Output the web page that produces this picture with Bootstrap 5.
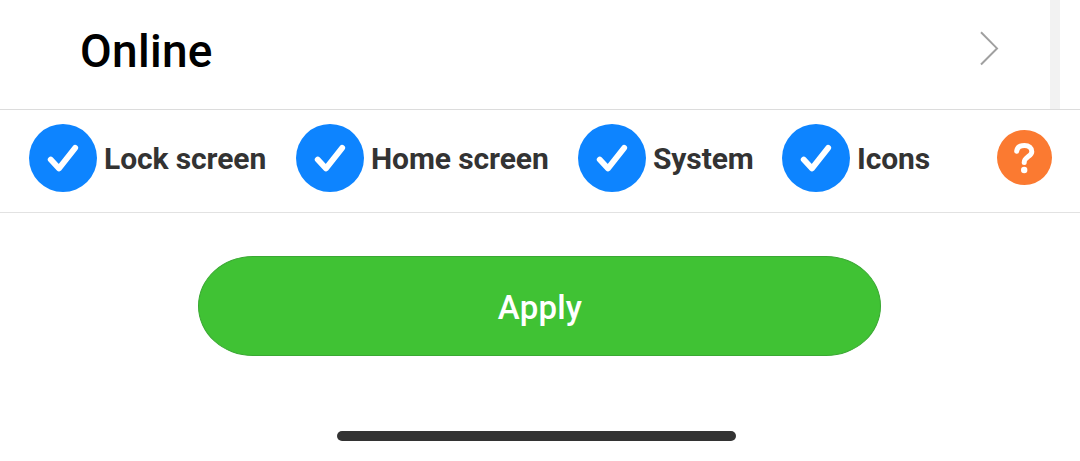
<!DOCTYPE html>
<html lang="en">
<head>
  <meta charset="UTF-8">
  <title>Apply theme</title>
  <meta name="viewport" content="width=device-width, initial-scale=1">
  <!-- Bootstrap 5 CDN -->
  <link href="https://cdn.jsdelivr.net/npm/bootstrap@5.3.0/dist/css/bootstrap.min.css" rel="stylesheet">
  <style>
    body {
      font-family: Roboto, "Liberation Sans", sans-serif;
      width: 1080px;
      height: 461px;
    }
    .online-row {
      height: 109px;
      padding-left: 80px;
    }
    .online-title {
      font-size: 46px;
      font-weight: 500;
      line-height: 54px;
      letter-spacing: .3px;
      padding-bottom: 7px;
      color: #000;
    }
    .chevron { margin: 0 50px 13px 0; }
    .scroll-track {
      width: 10px;
      margin-right: 20px;
      background: #f2f2f2;
    }
    .options-row {
      height: 104px;
      padding: 14px 28px 0 29px;
      border-top: 1px solid #dcdcdc;
      border-bottom: 1px solid #e2e2e2;
    }
    .option {
      gap: 7px;
      height: 68px;
      font-size: 30px;
      letter-spacing: -.1px;
      color: #333;
      white-space: nowrap;
    }
    .option-lock { width: 267px; }
    .option-home { width: 282px; }
    .option-system { width: 204px; }
    .option span {
      line-height: 36px;
      padding-top: 2px;
    }
    .help {
      width: 55px;
      height: 55px;
      margin-top: 6px;
    }
    .apply-btn,
    .apply-btn:hover {
      width: 683px;
      height: 100px;
      margin: 43px 0 0 198px;
      padding: 3px 0 0 1px;
      border: 1px solid #3aa833;
      border-radius: 55px / 50px;
      background: #40c234;
      color: #fff;
      font-size: 33px;
      font-weight: 500;
      letter-spacing: .2px;
    }
    .home-bar {
      width: 399px;
      height: 10px;
      margin: 75px 0 0 337px;
      background: #333;
    }
  </style>
</head>
<body class="bg-white overflow-hidden">
  <svg class="d-none">
    <symbol id="check" viewBox="0 0 68 68">
      <circle cx="34" cy="34" r="34" fill="#0d84ff"/>
      <path d="M21.7 35.6L30 44.4L46.2 23.9" fill="none" stroke="#fff" stroke-width="5.8" stroke-linecap="round" stroke-linejoin="round"/>
    </symbol>
  </svg>

  <div class="online-row d-flex">
    <div class="d-flex flex-grow-1 justify-content-between align-items-center">
      <div class="online-title">Online</div>
      <svg class="chevron" width="22" height="36" viewBox="0 0 22 36">
        <path d="M3 2.3L19 18.4L3 34.5" fill="none" stroke="#a0a0a0" stroke-width="2"/>
      </svg>
    </div>
    <div class="scroll-track"></div>
  </div>

  <div class="options-row d-flex align-items-start">
    <div class="option option-lock d-flex align-items-center fw-bold">
      <svg width="68" height="68"><use href="#check"/></svg>
      <span>Lock screen</span>
    </div>
    <div class="option option-home d-flex align-items-center fw-bold">
      <svg width="68" height="68"><use href="#check"/></svg>
      <span>Home screen</span>
    </div>
    <div class="option option-system d-flex align-items-center fw-bold">
      <svg width="68" height="68"><use href="#check"/></svg>
      <span>System</span>
    </div>
    <div class="option d-flex align-items-center fw-bold">
      <svg width="68" height="68"><use href="#check"/></svg>
      <span>Icons</span>
    </div>
    <svg class="help ms-auto" viewBox="0 0 55 55">
      <circle cx="27.5" cy="27.5" r="27.5" fill="#fb7a31"/>
      <path d="M19.7 21.2C20.2 17.6 23.2 15.6 27.5 15.6C32 15.6 34.8 18 34.8 21.7C34.8 26.4 27.2 26.8 27.2 32.4" fill="none" stroke="#fff" stroke-width="5" stroke-linecap="round"/>
      <circle cx="27.2" cy="40" r="3.2" fill="#fff"/>
    </svg>
  </div>

  <button type="button" class="btn apply-btn d-block">Apply</button>
  <div class="home-bar rounded-pill"></div>

  <!-- Bootstrap 5 JS -->
  <script src="https://cdn.jsdelivr.net/npm/bootstrap@5.3.0/dist/js/bootstrap.bundle.min.js"></script>
</body>
</html>
